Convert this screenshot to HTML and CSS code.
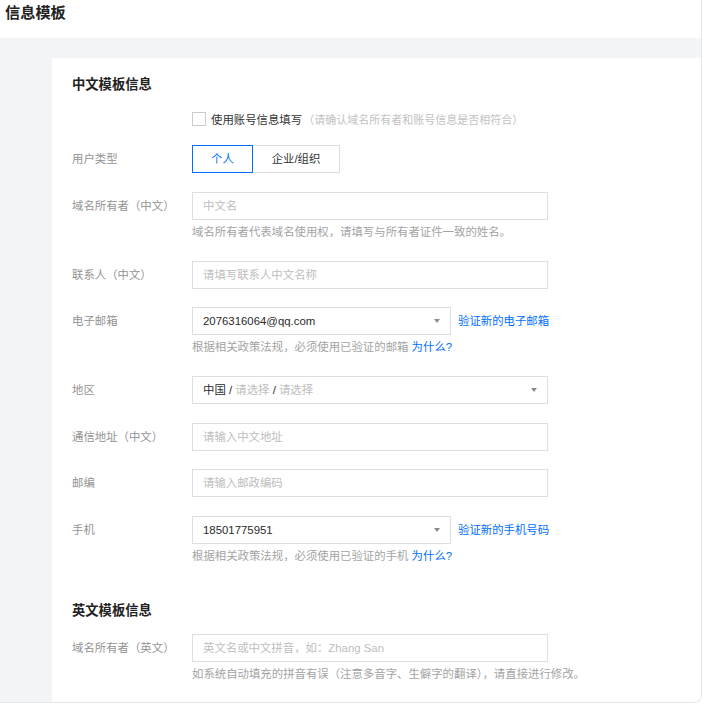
FILE: index.html
```html
<!DOCTYPE html>
<html lang="zh-CN">
<head>
<meta charset="utf-8">
<title>信息模板</title>
<link rel="stylesheet" href="styles.css">
</head>
<body>
<div class="frame">
  <div class="header">信息模板</div>
  <div class="body">
    <div class="card">
      <div class="section-title">中文模板信息</div>
      <div class="row row-check">
        <div class="label"></div>
        <div class="field check-field">
          <span class="checkbox"></span>
          <span class="check-text">使用账号信息填写</span>
          <span class="check-hint">（请确认域名所有者和账号信息是否相符合）</span>
        </div>
      </div>
      <div class="row">
        <div class="label">用户类型</div>
        <div class="field">
          <div class="segment">
            <span class="seg seg-on">个人</span>
            <span class="seg seg-off">企业/组织</span>
          </div>
        </div>
      </div>
      <div class="row">
        <div class="label">域名所有者（中文）</div>
        <div class="field">
          <div class="input"><span class="ph">中文名</span></div>
          <div class="help">域名所有者代表域名使用权，请填写与所有者证件一致的姓名。</div>
        </div>
      </div>
      <div class="row">
        <div class="label">联系人（中文）</div>
        <div class="field">
          <div class="input"><span class="ph">请填写联系人中文名称</span></div>
        </div>
      </div>
      <div class="row">
        <div class="label">电子邮箱</div>
        <div class="field">
          <div class="inline">
            <div class="input select short"><span class="val">2076316064@qq.com</span><span class="arrow"></span></div>
            <a class="link side-link">验证新的电子邮箱</a>
          </div>
          <div class="help">根据相关政策法规，必须使用已验证的邮箱 <a class="link">为什么?</a></div>
        </div>
      </div>
      <div class="row">
        <div class="label">地区</div>
        <div class="field">
          <div class="input select"><span class="val">中国 / </span><span class="ph">请选择</span><span class="val"> / </span><span class="ph">请选择</span><span class="arrow"></span></div>
        </div>
      </div>
      <div class="row">
        <div class="label">通信地址（中文）</div>
        <div class="field">
          <div class="input"><span class="ph">请输入中文地址</span></div>
        </div>
      </div>
      <div class="row">
        <div class="label">邮编</div>
        <div class="field">
          <div class="input"><span class="ph">请输入邮政编码</span></div>
        </div>
      </div>
      <div class="row">
        <div class="label">手机</div>
        <div class="field">
          <div class="inline">
            <div class="input select short"><span class="val">18501775951</span><span class="arrow"></span></div>
            <a class="link side-link">验证新的手机号码</a>
          </div>
          <div class="help">根据相关政策法规，必须使用已验证的手机 <a class="link">为什么?</a></div>
        </div>
      </div>

      <div class="section-title section-second">英文模板信息</div>
      <div class="row">
        <div class="label">域名所有者（英文）</div>
        <div class="field">
          <div class="input"><span class="ph">英文名或中文拼音，如：Zhang San</span></div>
          <div class="help">如系统自动填充的拼音有误（注意多音字、生僻字的翻译），请直接进行修改。</div>
        </div>
      </div>
    </div>
  </div>
</div>
</body>
</html>
```

FILE: styles.css
```css
html, body {
  margin: 0;
  padding: 0;
  background: #ffffff;
}

body {
  font-family: "Liberation Sans", "Noto Sans CJK SC", sans-serif;
  font-size: 11.4px;
  color: #333333;
}

.frame {
  width: 701px;
  height: 702px;
  border-right: 1px solid #e6e6e6;
  border-bottom: 1px solid #e6e6e6;
  border-bottom-right-radius: 8px;
  overflow: hidden;
  display: flex;
  flex-direction: column;
}

.header {
  height: 38px;
  flex: none;
  box-sizing: border-box;
  padding: 3px 0 0 5px;
  font-size: 15.2px;
  line-height: 20px;
  font-weight: bold;
  color: #222222;
}

.body {
  flex: 1;
  background: #f3f4f7;
  padding: 20px 0 0 52px;
  display: flex;
}

.card {
  flex: 1;
  background: #ffffff;
  padding: 17px 20px 0 20px;
}

.section-title {
  font-size: 13.3px;
  font-weight: bold;
  line-height: 20px;
  color: #222222;
  margin-bottom: 14px;
}

.section-second {
  margin-top: 35px;
  margin-bottom: 13px;
}

.row {
  display: flex;
  align-items: flex-start;
  margin-bottom: 18.5px;
}

.row-check {
  margin-bottom: 16px;
}

.label {
  width: 120px;
  flex: none;
  line-height: 28px;
  color: #939393;
  white-space: nowrap;
}

.row-check .label {
  line-height: 20px;
}

.field {
  display: flex;
  flex-direction: column;
}

.check-field {
  flex-direction: row;
  align-items: center;
  height: 20px;
}

.checkbox {
  width: 14px;
  height: 14px;
  box-sizing: border-box;
  border: 1px solid #cccccc;
  background: #ffffff;
  margin-right: 5px;
}

.check-text {
  color: #333333;
}

.check-hint {
  font-size: 11px;
  color: #c2c2c2;
  margin-left: 1px;
}

.segment {
  display: flex;
  height: 28px;
}

.seg {
  box-sizing: border-box;
  height: 28px;
  line-height: 26px;
  text-align: center;
  border: 1px solid #dddddd;
}

.seg-on {
  width: 61px;
  border-color: #006eff;
  color: #006eff;
}

.seg-off {
  width: 87px;
  border-left: none;
  color: #333333;
}

.input {
  width: 356px;
  height: 28px;
  box-sizing: border-box;
  border: 1px solid #dedede;
  padding: 0 10px;
  line-height: 26px;
  display: flex;
  align-items: center;
  white-space: pre;
}

.short {
  width: 259px;
}

.ph {
  color: #bdbdbd;
}

.val {
  color: #2b2b2b;
}

.select {
  position: relative;
}

.arrow {
  margin-left: auto;
  width: 0;
  height: 0;
  border-left: 3.5px solid transparent;
  border-right: 3.5px solid transparent;
  border-top: 4px solid #8c8c8c;
  margin-right: 0;
}

.inline {
  display: flex;
  align-items: center;
}

.link {
  color: #006eff;
  text-decoration: none;
}

.side-link {
  margin-left: 7px;
  line-height: 28px;
}

.help {
  margin-top: 3px;
  line-height: 19.5px;
  color: #a3a3a3;
  white-space: nowrap;
}
```
